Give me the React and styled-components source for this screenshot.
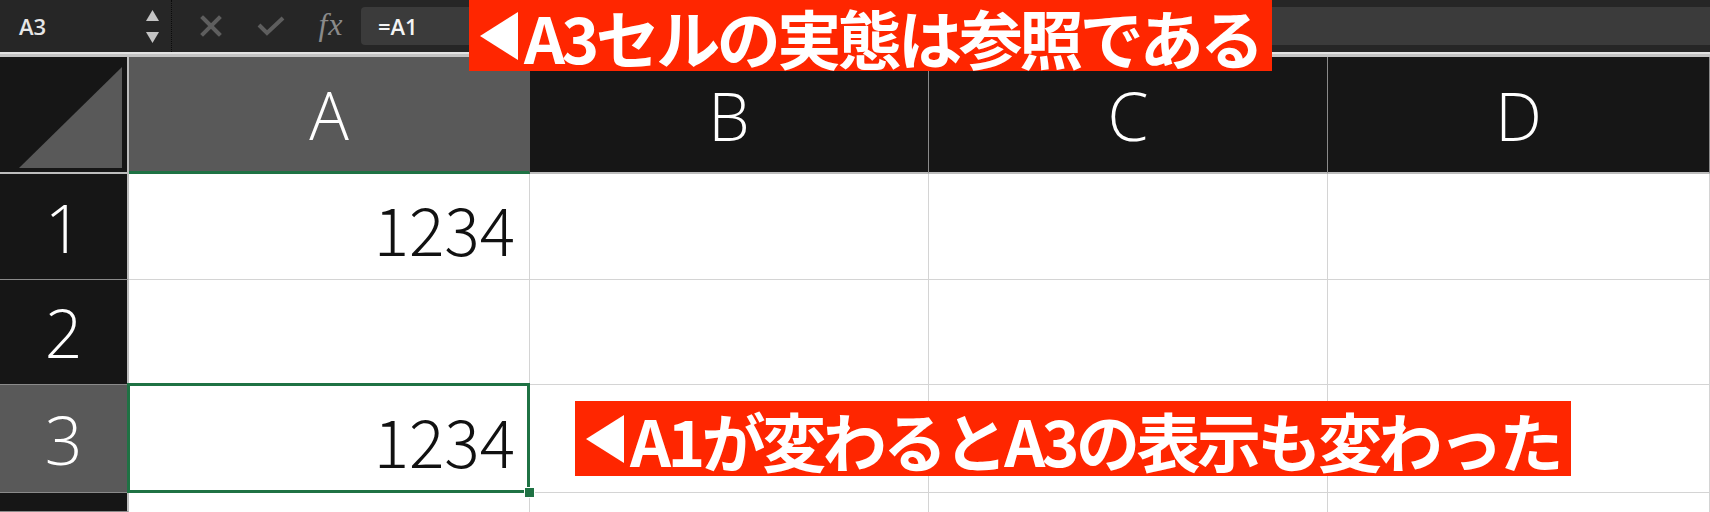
import React from "react";
import styled, { createGlobalStyle } from "styled-components";

const GlobalStyle = createGlobalStyle`
  html, body {
    margin: 0;
    padding: 0;
    background: #161616;
  }
  body {
    font-family: "Open Sans", "Noto Sans CJK JP", sans-serif;
  }
`;

const Screen = styled.div`
  position: relative;
  width: 1710px;
  height: 512px;
  overflow: hidden;
  background: #ffffff;
`;

const Toolbar = styled.div`
  display: flex;
  align-items: center;
  height: 52px;
  background: #262626;
`;

const NameBox = styled.div`
  display: flex;
  align-items: center;
  justify-content: space-between;
  width: 172px;
  height: 100%;
  box-sizing: border-box;
  padding: 0 12px 0 19px;
  border-right: 1px dotted #0b0b0b;
  color: #e6e6e6;
  font-family: "Open Sans", sans-serif;
  font-size: 22px;
  font-weight: 600;
`;

const Spinner = styled.div`
  display: flex;
  flex-direction: column;
  gap: 11px;
`;

const EditButtons = styled.div`
  display: flex;
  height: 100%;
  padding-left: 9px;
`;

const IconSlot = styled.div`
  display: flex;
  align-items: center;
  justify-content: center;
  width: 60px;
  height: 100%;
`;

const Fx = styled.span`
  color: #8a8a8a;
  font-family: "Liberation Serif", serif;
  font-style: italic;
  font-size: 32px;
  letter-spacing: 1px;
  margin-top: -4px;
`;

const FormulaInput = styled.div`
  flex: 1;
  display: flex;
  align-items: center;
  height: 38px;
  padding-left: 17px;
  border-radius: 4px 0 0 4px;
  background: #3b3b3b;
  color: #f4f4f4;
  font-family: "Open Sans", sans-serif;
  font-size: 22px;
  font-weight: 600;
`;

const Separator = styled.div`
  height: 5px;
  box-sizing: border-box;
  background: #c4c4c4;
  border-top: 2px solid #e2e2e2;
`;

const Sheet = styled.div`
  display: grid;
  grid-template-columns: 129px 401px 399px 399px 1fr;
  grid-template-rows: 117px 106px 105px 108px 1fr;
  height: 455px;
`;

const Corner = styled.div`
  box-sizing: border-box;
  padding: 10px 5px 4px 19px;
  background: #161616;
  border-right: 2px solid #bdbdbd;
  border-bottom: 2px solid #bdbdbd;
  svg {
    display: block;
    width: 100%;
    height: 100%;
  }
`;

const HeaderText = styled.div`
  display: flex;
  align-items: center;
  justify-content: center;
  box-sizing: border-box;
  color: #ffffff;
  font-family: "Open Sans", sans-serif;
  font-weight: 300;
  font-size: 66px;
  line-height: 1;
`;

const ColHeader = styled(HeaderText)`
  background: ${(p) => (p.$active ? "#595959" : "#161616")};
  border-right: 1px solid ${(p) => (p.$active ? "#595959" : "#8a8a8a")};
  border-bottom: ${(p) =>
    p.$active ? "3px solid #1f7244" : "2px solid #bdbdbd"};
`;

const RowHeader = styled(HeaderText)`
  background: ${(p) => (p.$active ? "#595959" : "#161616")};
  border-right: 2px solid #bdbdbd;
  border-bottom: 1px solid #8a8a8a;
`;

const Cell = styled.div`
  position: ${(p) => (p.$selected ? "relative" : "static")};
  display: flex;
  align-items: center;
  justify-content: flex-end;
  box-sizing: border-box;
  padding-right: 14px;
  background: #ffffff;
  border-right: 1px solid #d4d4d4;
  border-bottom: ${(p) => (p.$last ? "none" : "1px solid #d4d4d4")};
  color: #111111;
  font-family: "Noto Sans CJK JP", sans-serif;
  font-weight: 300;
  font-size: 66px;
  line-height: 1;

  ${(p) =>
    p.$selected &&
    `
    &::after {
      content: "";
      position: absolute;
      top: -2px;
      left: -2px;
      right: -1px;
      bottom: -1px;
      border: 3px solid #1f7244;
      z-index: 2;
    }
  `}
`;

const FillHandle = styled.span`
  position: absolute;
  right: -6px;
  bottom: -6px;
  width: 9px;
  height: 9px;
  background: #1f7244;
  border: 1px solid #ffffff;
  z-index: 3;
`;

const Callout = styled.div`
  position: absolute;
  top: ${(p) => p.$top}px;
  left: ${(p) => p.$left}px;
  display: flex;
  align-items: center;
  gap: 6px;
  height: ${(p) => p.$height}px;
  padding: 0 11px 0 11px;
  background: #ff2600;
  color: #ffffff;
  font-family: "Noto Sans CJK JP", sans-serif;
  font-weight: 700;
  font-size: 64px;
  letter-spacing: -3.5px;
  line-height: 1;
  white-space: nowrap;
  z-index: 5;
`;

const Pointer = () => (
  <svg width="38" height="48" viewBox="0 0 38 48">
    <polygon points="38,0 38,48 0,24" fill="#ffffff" />
  </svg>
);

const columns = ["A", "B", "C", "D"];
const rows = [
  { n: "1", values: ["1234", "", "", ""] },
  { n: "2", values: ["", "", "", ""] },
  { n: "3", values: ["1234", "", "", ""], active: true },
  { n: "", values: ["", "", "", ""], last: true },
];

export default function App() {
  return (
    <>
      <GlobalStyle />
      <Screen>
        <Toolbar>
          <NameBox>
            <span>A3</span>
            <Spinner>
              <svg width="13" height="11" viewBox="0 0 13 11">
                <polygon points="6.5,0 13,11 0,11" fill="#c4c4c4" />
              </svg>
              <svg width="13" height="11" viewBox="0 0 13 11">
                <polygon points="0,0 13,0 6.5,11" fill="#c4c4c4" />
              </svg>
            </Spinner>
          </NameBox>
          <EditButtons>
            <IconSlot>
              <svg width="22" height="22" viewBox="0 0 22 22">
                <path
                  d="M3 3 L19 19 M19 3 L3 19"
                  stroke="#5e5e5e"
                  strokeWidth="4"
                  strokeLinecap="square"
                />
              </svg>
            </IconSlot>
            <IconSlot>
              <svg width="28" height="20" viewBox="0 0 28 20">
                <path
                  d="M2 9 L10 17 L26 2"
                  stroke="#5e5e5e"
                  strokeWidth="4"
                  fill="none"
                />
              </svg>
            </IconSlot>
            <IconSlot>
              <Fx>fx</Fx>
            </IconSlot>
          </EditButtons>
          <FormulaInput>=A1</FormulaInput>
        </Toolbar>
        <Separator />
        <Sheet>
          <Corner>
            <svg viewBox="0 0 100 100" preserveAspectRatio="none">
              <polygon points="0,100 100,100 100,0" fill="#595959" />
            </svg>
          </Corner>
          {columns.map((c) => (
            <ColHeader key={c} $active={c === "A"}>
              {c}
            </ColHeader>
          ))}
          {rows.map((r, i) => (
            <React.Fragment key={i}>
              <RowHeader $active={r.active}>{r.n}</RowHeader>
              {r.values.map((v, j) => {
                const selected = r.active && j === 0;
                return (
                  <Cell key={j} $selected={selected} $last={r.last}>
                    {v}
                    {selected && <FillHandle />}
                  </Cell>
                );
              })}
            </React.Fragment>
          ))}
        </Sheet>

        <Callout $top={0} $left={469} $height={71}>
          <Pointer />
          A3セルの実態は参照である
        </Callout>
        <Callout $top={401} $left={575} $height={75}>
          <Pointer />
          A1が変わるとA3の表示も変わった
        </Callout>
      </Screen>
    </>
  );
}
